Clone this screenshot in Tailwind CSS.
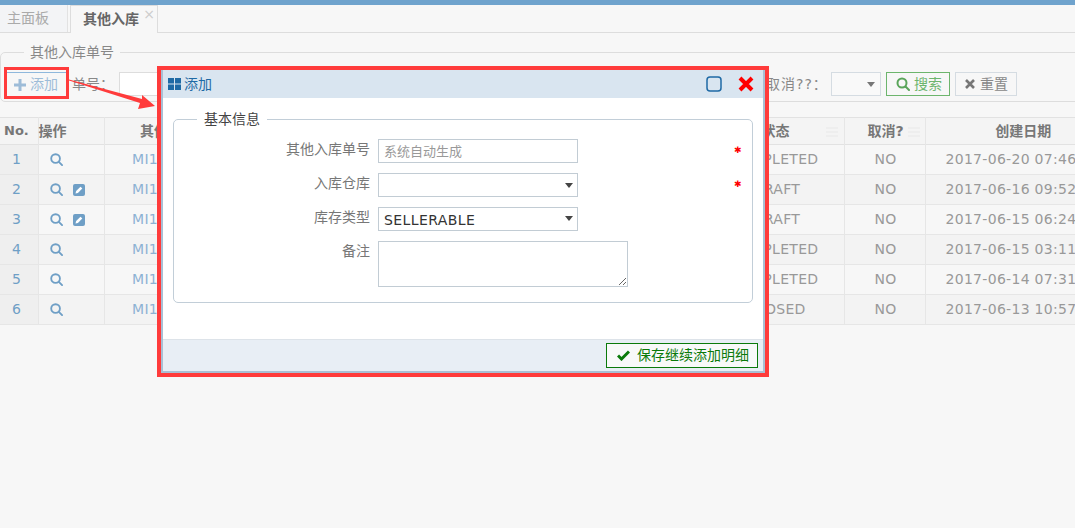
<!DOCTYPE html>
<html lang="zh-CN">
<head>
<meta charset="UTF-8">
<title>其他入库</title>
<script src="https://cdn.jsdelivr.net/npm/@tailwindcss/browser@4"></script>
</head>
<body class="relative w-[1075px] h-[528px] overflow-hidden bg-[#f7f7f7] text-[14px] text-[#777] font-['DejaVu_Sans','Noto_Sans_CJK_SC',sans-serif]">

<!-- top bar -->
<div class="h-[5px] bg-[#6fa3cd]"></div>

<!-- tabs -->
<div class="flex h-[28px] border-b border-[#ddd]">
  <div class="w-[68px] h-[27px] pl-[7px] leading-[27px] bg-[#f3f4f6] border-r border-[#e2e2e2] text-[#aaa]">主面板</div>
  <div class="relative ml-[2px] w-[88px] h-[28px] pl-[12px] leading-[27px] bg-[#f7f7f7] border border-b-0 border-[#ddd] font-bold text-[#666]">其他入库<span class="absolute right-[2px] top-[-5px] text-[14px] font-normal text-[#ccc]">×</span></div>
</div>

<!-- search fieldset -->
<fieldset class="mt-[9px] h-[60px] w-[1085px] border border-[#ddd] rounded-[5px]">
  <legend class="ml-[23px] px-[6px] h-[20px] leading-[20px] text-[#888]">其他入库单号</legend>
  <div class="flex items-center h-[24px] mt-[10px] pl-[6px]">
    <div class="flex items-center w-[59px] h-[24px] pl-[7px] gap-[4px] border-t border-[#8fb8dc] text-[#9dbcd8]">
      <svg class="w-[12px] h-[12px]" viewBox="0 0 12 12"><path d="M4.5 0h3v4.5H12v3H7.5V12h-3V7.5H0v-3h4.5z" fill="#9dbcd8"/></svg>
      <span>添加</span>
    </div>
    <span class="ml-[6px] w-[47px] text-[#888]">单号：</span>
    <div class="w-[200px] h-[24px] border border-[#ddd] bg-white"></div>
    <span class="ml-[447px] w-[65px] text-[#888] tracking-[1px]">取消??：</span>
    <div class="flex items-center justify-end w-[50px] h-[24px] pr-[5px] border border-[#d5dce2] bg-[#f9f9f9]">
      <svg class="w-[8px] h-[5px]" viewBox="0 0 8 5"><path d="M0 0h8L4 5z" fill="#777"/></svg>
    </div>
    <div class="flex items-center ml-[5px] w-[64px] h-[24px] pl-[9px] gap-[4px] border border-[#6db56d] text-[#6db56d]">
      <svg class="w-[14px] h-[14px]" viewBox="0 0 14 14" fill="none" stroke="#5aa55a" stroke-width="2"><circle cx="6" cy="6" r="4.5"/><path d="M9.5 9.5 13 13" stroke-linecap="round"/></svg>
      <span>搜索</span>
    </div>
    <div class="flex items-center ml-[5px] w-[62px] h-[24px] pl-[9px] gap-[5px] border border-[#d5dce2] text-[#888]">
      <svg class="w-[10px] h-[10px]" viewBox="0 0 10 10" stroke="#777" stroke-width="2.6"><path d="M1 1l8 8M9 1l-8 8"/></svg>
      <span>重置</span>
    </div>
  </div>
</fieldset>

<!-- table -->
<table class="mt-[15px] w-[1121px] table-fixed border-collapse">
  <colgroup>
    <col class="w-[38px]"><col class="w-[66px]"><col class="w-[156px]"><col class="w-[444px]"><col class="w-[140px]"><col class="w-[81px]"><col class="w-[196px]">
  </colgroup>
  <thead>
    <tr class="h-[27px] bg-[#f4f4f4] font-bold text-[#777] border-t border-b border-[#e2e2e2]">
      <th class="border-r border-[#e6e6e6] text-[13px] text-left pl-[4px]">No.</th>
      <th class="border-r border-[#e6e6e6] text-left">操作</th>
      <th class="border-r border-[#e6e6e6]">其他入库单号</th>
      <th class="border-r border-[#e6e6e6]"></th>
      <th class="relative border-r border-[#e6e6e6]"><span class="pl-[3px]">状态</span><svg class="absolute right-[6px] top-[9px] w-[12px] h-[10px]" viewBox="0 0 12 10" stroke="#ececec" stroke-width="1.5"><path d="M0 1h12M0 5h12M0 9h12"/></svg></th>
      <th class="relative border-r border-[#e6e6e6]"><span class="pl-[2px]">取消?</span><svg class="absolute right-[5px] top-[9px] w-[12px] h-[10px]" viewBox="0 0 12 10" stroke="#ececec" stroke-width="1.5"><path d="M0 1h12M0 5h12M0 9h12"/></svg></th>
      <th>创建日期</th>
    </tr>
  </thead>
  <tbody class="text-center text-[#999] tracking-[0.3px]">
    <tr class="h-[30px] border-b border-[#e6e6e6]">
      <td class="bg-[#efefef] border-r border-[#e6e6e6] text-[#6f9fc6] text-left pl-[12px]">1</td>
      <td class="border-r border-[#e6e6e6]"><div class="flex items-center gap-[10px] pl-[11px]"><svg class="w-[13px] h-[13px]" viewBox="0 0 14 14" fill="none" stroke="#6f9fc6" stroke-width="2"><circle cx="6" cy="6" r="4.7"/><path d="M9.5 9.5 13 13" stroke-linecap="round"/></svg></div></td>
      <td class="border-r border-[#e6e6e6] text-[#8db2d4] pl-[9px]">MI1406200001</td><td class="border-r border-[#e6e6e6]"></td>
      <td class="border-r border-[#e6e6e6]">COMPLETED</td><td class="border-r border-[#e6e6e6] pl-[2px]">NO</td><td class="text-left pl-[20px]">2017-06-20 07:46:12</td>
    </tr>
    <tr class="h-[30px] bg-[#f3f3f3] border-b border-[#e6e6e6]">
      <td class="bg-[#efefef] border-r border-[#e6e6e6] text-[#6f9fc6] text-left pl-[12px]">2</td>
      <td class="border-r border-[#e6e6e6]"><div class="flex items-center gap-[10px] pl-[11px]"><svg class="w-[13px] h-[13px]" viewBox="0 0 14 14" fill="none" stroke="#6f9fc6" stroke-width="2"><circle cx="6" cy="6" r="4.7"/><path d="M9.5 9.5 13 13" stroke-linecap="round"/></svg><svg class="w-[12px] h-[12px]" viewBox="0 0 12 12"><rect width="12" height="12" rx="2" fill="#6f9fc6"/><path d="M2.5 9.5l.6-2.4 4.4-4.4 1.8 1.8-4.4 4.4z" fill="#fff"/></svg></div></td>
      <td class="border-r border-[#e6e6e6] text-[#8db2d4] pl-[9px]">MI1406160001</td><td class="border-r border-[#e6e6e6]"></td>
      <td class="border-r border-[#e6e6e6] pl-[5px]">DRAFT</td><td class="border-r border-[#e6e6e6] pl-[2px]">NO</td><td class="text-left pl-[20px]">2017-06-16 09:52:40</td>
    </tr>
    <tr class="h-[30px] border-b border-[#e6e6e6]">
      <td class="bg-[#efefef] border-r border-[#e6e6e6] text-[#6f9fc6] text-left pl-[12px]">3</td>
      <td class="border-r border-[#e6e6e6]"><div class="flex items-center gap-[10px] pl-[11px]"><svg class="w-[13px] h-[13px]" viewBox="0 0 14 14" fill="none" stroke="#6f9fc6" stroke-width="2"><circle cx="6" cy="6" r="4.7"/><path d="M9.5 9.5 13 13" stroke-linecap="round"/></svg><svg class="w-[12px] h-[12px]" viewBox="0 0 12 12"><rect width="12" height="12" rx="2" fill="#6f9fc6"/><path d="M2.5 9.5l.6-2.4 4.4-4.4 1.8 1.8-4.4 4.4z" fill="#fff"/></svg></div></td>
      <td class="border-r border-[#e6e6e6] text-[#8db2d4] pl-[9px]">MI1406150002</td><td class="border-r border-[#e6e6e6]"></td>
      <td class="border-r border-[#e6e6e6] pl-[5px]">DRAFT</td><td class="border-r border-[#e6e6e6] pl-[2px]">NO</td><td class="text-left pl-[20px]">2017-06-15 06:24:03</td>
    </tr>
    <tr class="h-[30px] bg-[#f3f3f3] border-b border-[#e6e6e6]">
      <td class="bg-[#efefef] border-r border-[#e6e6e6] text-[#6f9fc6] text-left pl-[12px]">4</td>
      <td class="border-r border-[#e6e6e6]"><div class="flex items-center gap-[10px] pl-[11px]"><svg class="w-[13px] h-[13px]" viewBox="0 0 14 14" fill="none" stroke="#6f9fc6" stroke-width="2"><circle cx="6" cy="6" r="4.7"/><path d="M9.5 9.5 13 13" stroke-linecap="round"/></svg></div></td>
      <td class="border-r border-[#e6e6e6] text-[#8db2d4] pl-[9px]">MI1406150001</td><td class="border-r border-[#e6e6e6]"></td>
      <td class="border-r border-[#e6e6e6]">COMPLETED</td><td class="border-r border-[#e6e6e6] pl-[2px]">NO</td><td class="text-left pl-[20px]">2017-06-15 03:11:27</td>
    </tr>
    <tr class="h-[30px] border-b border-[#e6e6e6]">
      <td class="bg-[#efefef] border-r border-[#e6e6e6] text-[#6f9fc6] text-left pl-[12px]">5</td>
      <td class="border-r border-[#e6e6e6]"><div class="flex items-center gap-[10px] pl-[11px]"><svg class="w-[13px] h-[13px]" viewBox="0 0 14 14" fill="none" stroke="#6f9fc6" stroke-width="2"><circle cx="6" cy="6" r="4.7"/><path d="M9.5 9.5 13 13" stroke-linecap="round"/></svg></div></td>
      <td class="border-r border-[#e6e6e6] text-[#8db2d4] pl-[9px]">MI1406140001</td><td class="border-r border-[#e6e6e6]"></td>
      <td class="border-r border-[#e6e6e6]">COMPLETED</td><td class="border-r border-[#e6e6e6] pl-[2px]">NO</td><td class="text-left pl-[20px]">2017-06-14 07:31:55</td>
    </tr>
    <tr class="h-[30px] bg-[#f3f3f3] border-b border-[#e6e6e6]">
      <td class="bg-[#efefef] border-r border-[#e6e6e6] text-[#6f9fc6] text-left pl-[12px]">6</td>
      <td class="border-r border-[#e6e6e6]"><div class="flex items-center gap-[10px] pl-[11px]"><svg class="w-[13px] h-[13px]" viewBox="0 0 14 14" fill="none" stroke="#6f9fc6" stroke-width="2"><circle cx="6" cy="6" r="4.7"/><path d="M9.5 9.5 13 13" stroke-linecap="round"/></svg></div></td>
      <td class="border-r border-[#e6e6e6] text-[#8db2d4] pl-[9px]">MI1406130001</td><td class="border-r border-[#e6e6e6]"></td>
      <td class="border-r border-[#e6e6e6] pl-[5px]">CLOSED</td><td class="border-r border-[#e6e6e6] pl-[2px]">NO</td><td class="text-left pl-[20px]">2017-06-13 10:57:18</td>
    </tr>
  </tbody>
</table>

<!-- dialog window, with the red annotation box round it -->
<div class="absolute left-[157px] top-[66px] w-[612px] h-[311px] border-4 border-[#ff3b3b]">
  <div class="flex flex-col h-[303px] w-[604px] border-l-2 border-r-2 border-b-2 border-[#a9bfd4] bg-white">
    <div class="flex items-center h-[28px] pl-[5px] bg-[#d9e5f0] text-[#1f6aa5]">
      <svg class="w-[13px] h-[12px]" viewBox="0 0 13 12" fill="#1f6aa5"><rect width="6" height="5.5"/><rect x="7" width="6" height="5.5"/><rect y="6.5" width="6" height="5.5"/><rect x="7" y="6.5" width="6" height="5.5"/></svg>
      <span class="ml-[3px]">添加</span>
      <svg class="ml-auto w-[16px] h-[16px]" viewBox="0 0 16 16" fill="none" stroke="#1f6aa5" stroke-width="1.5"><rect x="1" y="1" width="14" height="14" rx="3"/></svg>
      <svg class="ml-[16px] mr-[9px] w-[16px] h-[16px]" viewBox="0 0 16 16" stroke="#f00" stroke-width="4"><path d="M2 2l12 12M14 2L2 14"/></svg>
    </div>
    <div class="flex-1 px-[10px] pt-[11px]">
      <fieldset class="h-[194px] border border-[#c2ced8] rounded-[5px]">
        <legend class="ml-[23px] px-[7px] h-[20px] leading-[20px] text-[#444]">基本信息</legend>
        <div class="flex flex-col gap-[10px] pt-[10px]">
          <div class="flex">
            <label class="w-[196px] text-right text-[#777]">其他入库单号</label>
            <input class="ml-[8px] w-[200px] h-[24px] px-[5px] border border-[#c2ccd4] text-[13px] placeholder:text-[#999] outline-none" placeholder="系统自动生成">
            <span class="ml-[156px] text-[9px] leading-[23px] text-[#f00]">✱</span>
          </div>
          <div class="flex">
            <label class="w-[196px] text-right text-[#777]">入库仓库</label>
            <div class="flex items-center justify-end ml-[8px] w-[200px] h-[24px] pr-[4px] border border-[#c2ccd4]"><svg class="w-[8px] h-[5px]" viewBox="0 0 8 5"><path d="M0 0h8L4 5z" fill="#444"/></svg></div>
            <span class="ml-[156px] text-[9px] leading-[23px] text-[#f00]">✱</span>
          </div>
          <div class="flex">
            <label class="w-[196px] text-right text-[#777]">库存类型</label>
            <div class="flex justify-between ml-[8px] w-[200px] h-[24px] pl-[5px] pr-[4px] border border-[#c2ccd4] leading-[25px] text-[#333] tracking-[0.4px]">SELLERABLE<svg class="w-[8px] h-[5px] mt-[8px]" viewBox="0 0 8 5"><path d="M0 0h8L4 5z" fill="#444"/></svg></div>
          </div>
          <div class="flex">
            <label class="w-[196px] text-right text-[#777]">备注</label>
            <textarea class="ml-[8px] w-[250px] h-[46px] border border-[#c2ccd4] outline-none"></textarea>
          </div>
        </div>
      </fieldset>
    </div>
    <div class="flex items-center justify-end h-[32px] pr-[5px] bg-[#e8eef5] border-t border-[#dde3e9]">
      <div class="flex items-center w-[152px] h-[25px] pl-[10px] gap-[7px] border border-[#0a7a0a] bg-[#f8f9f9] text-[#0a7a0a]">
        <svg class="w-[13px] h-[11px]" viewBox="0 0 13 11" fill="none" stroke="#0a7a0a" stroke-width="3"><path d="M1 5.5l3.5 3.5L12 1.5"/></svg>
        <span>保存继续添加明细</span>
      </div>
    </div>
  </div>
</div>

<!-- annotation: box round the add button and arrow to the dialog -->
<div class="absolute left-[4px] top-[67px] w-[65px] h-[32px] border-[3px] border-[#ff3b3b]"></div>
<svg class="absolute left-[60px] top-[70px] w-[100px] h-[45px]" viewBox="0 0 100 45">
  <path d="M9 9.5 82 29 82 25 95 36 78 39 80 33 9 10.5z" fill="#ff3b3b"/>
</svg>

</body>
</html>
